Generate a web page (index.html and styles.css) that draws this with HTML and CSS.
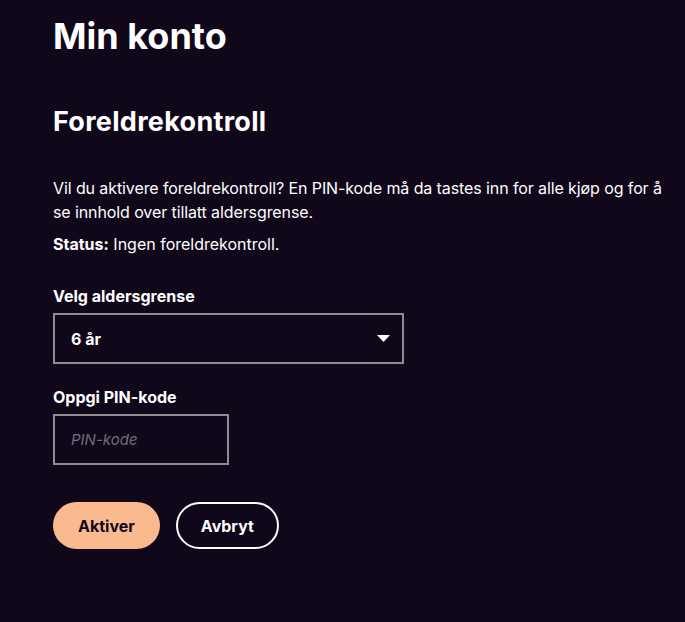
FILE: index.html
```html
<!DOCTYPE html>
<html lang="no">
<head>
  <meta charset="UTF-8" />
  <meta name="viewport" content="width=device-width, initial-scale=1" />
  <title>Min konto</title>
  <link rel="stylesheet" href="styles.css">
</head>
<body>
  <div class="page">
    <h1>Min konto</h1>

    <section class="parental">
      <h2>Foreldrekontroll</h2>
      <p class="intro">Vil du aktivere foreldrekontroll? En PIN-kode må da tastes inn for alle kjøp og for å se innhold over tillatt aldersgrense.</p>
      <p class="status"><strong>Status:</strong> Ingen foreldrekontroll.</p>

      <label class="field-label" for="age">Velg aldersgrense</label>
      <div class="select-wrap">
        <select id="age">
          <option>6 år</option>
          <option>9 år</option>
          <option>12 år</option>
          <option>15 år</option>
          <option>18 år</option>
        </select>
        <svg class="select-arrow" width="13" height="7" viewBox="0 0 13 7"><path d="M0 0h13L6.5 7z" fill="#fff"/></svg>
      </div>

      <label class="field-label pin-label" for="pin">Oppgi PIN-kode</label>
      <input type="password" id="pin" class="pin-input" placeholder="PIN-kode" />

      <div class="actions">
        <button class="btn btn-primary">Aktiver</button>
        <button class="btn btn-outline">Avbryt</button>
      </div>
    </section>
  </div>
</body>
</html>
```

FILE: styles.css
```css
body {
  margin: 0;
  background: #10071a;
  color: #fff;
  font-family: Inter, "Noto Sans", sans-serif;
}
.page {
  padding: 14px 16px 40px 53px;
}
h1 {
  margin: 0;
  font-size: 36px;
  font-weight: 700;
  line-height: 44px;
}
h2 {
  margin: 47px 0 0;
  font-size: 27px;
  font-weight: 700;
  line-height: 34px;
  letter-spacing: 0.3px;
}
.intro {
  margin: 37px 0 0;
  font-size: 16px;
  line-height: 24px;
  letter-spacing: -0.1px;
}
.status {
  margin: 8px 0 0;
  font-size: 16px;
  line-height: 24px;
}
.field-label {
  display: block;
  margin: 28px 0 5px;
  font-size: 16px;
  font-weight: 700;
  line-height: 24px;
}
.pin-label {
  margin-top: 21px;
}
.select-wrap {
  position: relative;
  width: 351px;
}
select {
  display: block;
  width: 100%;
  height: 51px;
  padding: 0 16px;
  background: transparent;
  color: #fff;
  border: 2px solid #8e8c91;
  border-radius: 0;
  font: 700 16px Inter, "Noto Sans", sans-serif;
  appearance: none;
  -webkit-appearance: none;
}
select option {
  color: #000;
}
.select-arrow {
  position: absolute;
  right: 14px;
  top: 22px;
  pointer-events: none;
}
.pin-input {
  display: block;
  box-sizing: border-box;
  width: 176px;
  height: 51px;
  padding: 0 16px;
  background: transparent;
  color: #fff;
  border: 2px solid #8e8c91;
  font-size: 15px;
  font-family: Inter, "Noto Sans", sans-serif;
}
.pin-input::placeholder {
  color: #726d78;
  font-style: italic;
}
.actions {
  display: flex;
  gap: 16px;
  margin-top: 37px;
}
.btn {
  height: 47px;
  border-radius: 24px;
  font: 700 16px Inter, "Noto Sans", sans-serif;
  cursor: pointer;
}
.btn-primary {
  padding: 0 25px;
  background: #fbb98f;
  color: #10071a;
  border: none;
}
.btn-outline {
  padding: 0 23px;
  background: transparent;
  color: #fff;
  border: 2px solid #fff;
}
```
